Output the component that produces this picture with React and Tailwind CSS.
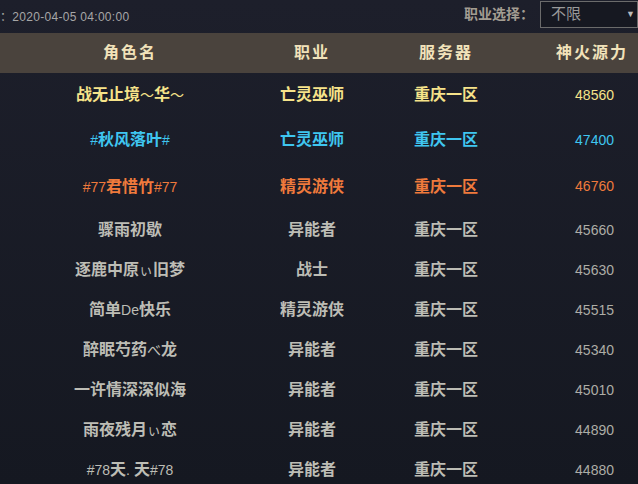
import React from "react";

const ROWS = [
  { name: "战无止境～华～", job: "亡灵巫师", power: 48560, tone: "text-[#f6e38a]", h: "h-[44px]" },
  { name: "#秋风落叶#", job: "亡灵巫师", power: 47400, tone: "text-[#3fc6f0]", h: "h-[46px]" },
  { name: "#77君惜竹#77", job: "精灵游侠", power: 46760, tone: "text-[#ef7a3c]", h: "h-[47px]" },
  { name: "骤雨初歇", job: "异能者", power: 45660 },
  { name: "逐鹿中原ぃ旧梦", job: "战士", power: 45630 },
  { name: "简单De快乐", job: "精灵游侠", power: 45515 },
  { name: "醉眠芍药べ龙", job: "异能者", power: 45340 },
  { name: "一许情深深似海", job: "异能者", power: 45010 },
  { name: "雨夜残月ぃ恋", job: "异能者", power: 44890 },
  { name: "#78天. 天#78", job: "异能者", power: 44880 },
];

// han characters render bold, latin / kana / symbols stay thin like the game font
const Name = ({ text }) => {
  const parts = [];
  let buf = "";
  let han = null;
  for (const ch of text) {
    const isHan = /[\u4e00-\u9fff]/.test(ch);
    if (han !== null && isHan !== han) {
      parts.push({ t: buf, han });
      buf = "";
    }
    buf += ch;
    han = isHan;
  }
  if (buf) parts.push({ t: buf, han });
  return (
    <span>
      {parts.map((p, i) =>
        p.han ? (
          <span key={i} className="font-bold">{p.t}</span>
        ) : (
          <span key={i} className="font-normal text-[14px]">{p.t}</span>
        )
      )}
    </span>
  );
};

export default function App() {
  return (
    <div className="w-[638px] h-[484px] overflow-hidden bg-gradient-to-b from-[#1d1f2b] to-[#151821] font-['Liberation_Sans','Noto_Sans_CJK_SC',sans-serif]">
      {/* top bar */}
      <div className="h-[33px] flex items-start justify-between">
        <div className="pt-[8px] text-[12px] text-[#a6a6a6] tracking-[0.3px]">：2020-04-05 04:00:00</div>
        <div className="flex items-center pt-[1px]">
          <span className="text-[14px] font-bold text-[#a39d92] mr-[6px]">职业选择：</span>
          <div className="w-[98px] h-[27px] border border-[#6b6b6b] bg-[#161821] flex items-center justify-between pl-[10px] pr-[2px]">
            <span className="text-[15px] text-[#9a9a9a]">不限</span>
            <span className="text-[9px] text-[#bbb]">▼</span>
          </div>
        </div>
      </div>

      {/* header */}
      <div className="h-[40px] bg-[#4a433d] grid grid-cols-[260px_104px_164px_1fr] items-center text-[16px] font-bold text-[#f1e2ba] tracking-[2px]">
        <div className="text-center">角色名</div>
        <div className="text-center">职业</div>
        <div className="text-center">服务器</div>
        <div className="text-center pl-[18px]">神火源力</div>
      </div>

      {/* rows */}
      {ROWS.map((r, i) => (
        <div
          key={i}
          className={`grid grid-cols-[260px_104px_164px_1fr] items-center text-[16px] ${r.h || "h-[40px]"} ${r.tone || "text-[#bdbdb5]"}`}
        >
          <div className="text-center"><Name text={r.name} /></div>
          <div className="text-center font-bold">{r.job}</div>
          <div className="text-center font-bold">重庆一区</div>
          <div className={`text-right pr-[24px] text-[14px] ${r.tone ? "" : "text-[#adada6]"}`}>{r.power}</div>
        </div>
      ))}
    </div>
  );
}
